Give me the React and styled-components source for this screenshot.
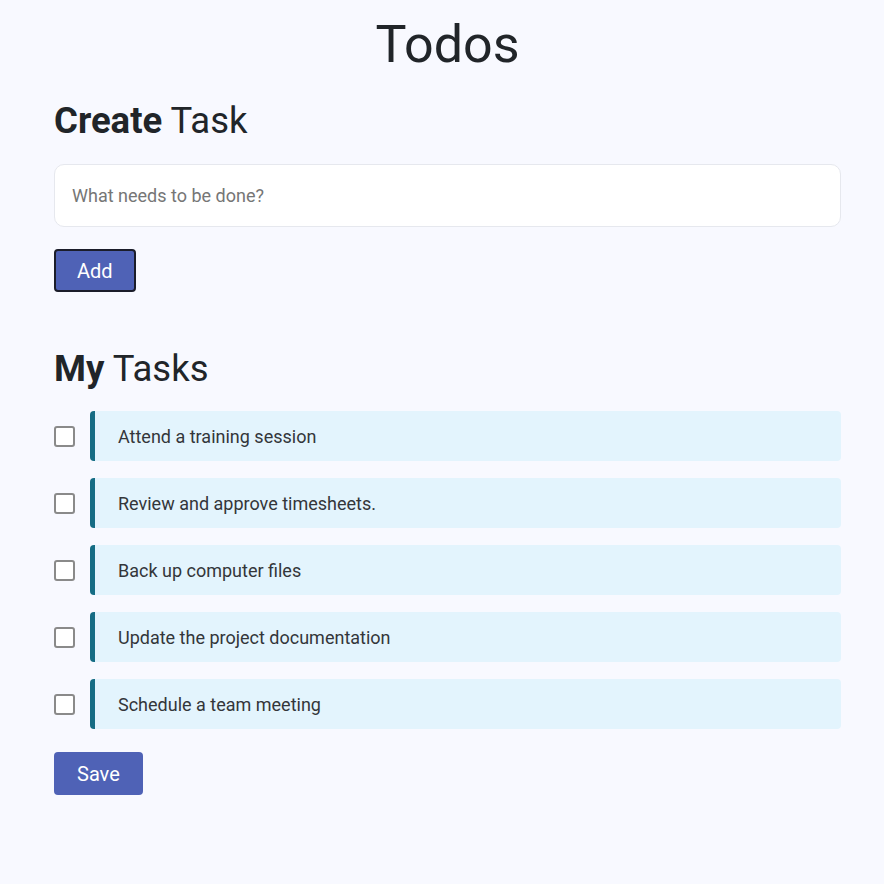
import React, { useState } from "react";
import styled, { createGlobalStyle } from "styled-components";

const GlobalStyle = createGlobalStyle`
  html, body {
    margin: 0;
    padding: 0;
    background: #f8f9ff;
    font-family: Roboto, "Liberation Sans", sans-serif;
    color: #212529;
  }
`;

const Page = styled.div`
  min-height: 884px;
  padding: 14px 43px 40px 54px;
  box-sizing: border-box;
`;

const Title = styled.h1`
  margin: 0;
  text-align: center;
  font-size: 52px;
  font-weight: 400;
  line-height: 62px;
`;

const Heading = styled.h2`
  margin: ${(p) => p.$top}px 0 0;
  font-size: 36.5px;
  font-weight: 400;
  line-height: 44px;

  b {
    font-weight: 700;
  }
`;

const TaskInput = styled.input`
  display: block;
  width: 100%;
  box-sizing: border-box;
  margin-top: 21px;
  height: 63px;
  padding: 0 17px;
  border: 1px solid #e6e8ee;
  border-radius: 10px;
  background: #fff;
  font-family: inherit;
  font-size: 18px;
  color: #333;
  outline: none;

  &::placeholder {
    color: #767676;
  }
`;

const Button = styled.button`
  display: block;
  margin-top: ${(p) => p.$top}px;
  height: 43px;
  padding: 0 ${(p) => p.$pad}px;
  border: ${(p) => (p.$focused ? "2px solid #1b1d2a" : "none")};
  border-radius: 4px;
  background: #4f62b6;
  color: #fff;
  font-family: inherit;
  font-size: 20px;
  cursor: pointer;
`;

const TaskList = styled.ul`
  list-style: none;
  margin: 20px 0 0;
  padding: 0;
  display: flex;
  flex-direction: column;
  gap: 17px;
`;

const TaskRow = styled.li`
  display: flex;
  align-items: center;
  gap: 15px;
`;

const Check = styled.input`
  appearance: none;
  flex: none;
  width: 21px;
  height: 21px;
  margin: 0;
  border: 2px solid #8a8a8a;
  border-radius: 3px;
  background: #fff;
  box-sizing: border-box;

  &:checked {
    background: #4f62b6;
    border-color: #4f62b6;
  }
`;

const TaskBar = styled.div`
  flex: 1;
  height: 50px;
  display: flex;
  align-items: center;
  padding-left: 23px;
  background: #e3f4fd;
  border-left: 5px solid #156c84;
  border-radius: 4px;
  font-size: 18px;
  color: #33363a;
  text-decoration: ${(p) => (p.$done ? "line-through" : "none")};
`;

const initialTasks = [
  "Attend a training session",
  "Review and approve timesheets.",
  "Back up computer files",
  "Update the project documentation",
  "Schedule a team meeting",
];

export default function App() {
  const [tasks, setTasks] = useState(
    initialTasks.map((text) => ({ text, done: false }))
  );
  const [value, setValue] = useState("");

  const addTask = () => {
    if (!value.trim()) return;
    setTasks([...tasks, { text: value.trim(), done: false }]);
    setValue("");
  };

  const toggle = (i) =>
    setTasks(tasks.map((t, j) => (j === i ? { ...t, done: !t.done } : t)));

  return (
    <>
      <GlobalStyle />
      <Page>
        <Title>Todos</Title>
        <Heading $top={23}>
          <b>Create</b> Task
        </Heading>
        <TaskInput
          placeholder="What needs to be done?"
          value={value}
          onChange={(e) => setValue(e.target.value)}
        />
        <Button $top={22} $pad={21} $focused onClick={addTask}>
          Add
        </Button>
        <Heading $top={55}>
          <b>My</b> Tasks
        </Heading>
        <TaskList>
          {tasks.map((t, i) => (
            <TaskRow key={i}>
              <Check
                type="checkbox"
                checked={t.done}
                onChange={() => toggle(i)}
              />
              <TaskBar $done={t.done}>{t.text}</TaskBar>
            </TaskRow>
          ))}
        </TaskList>
        <Button $top={23} $pad={23}>
          Save
        </Button>
      </Page>
    </>
  );
}
